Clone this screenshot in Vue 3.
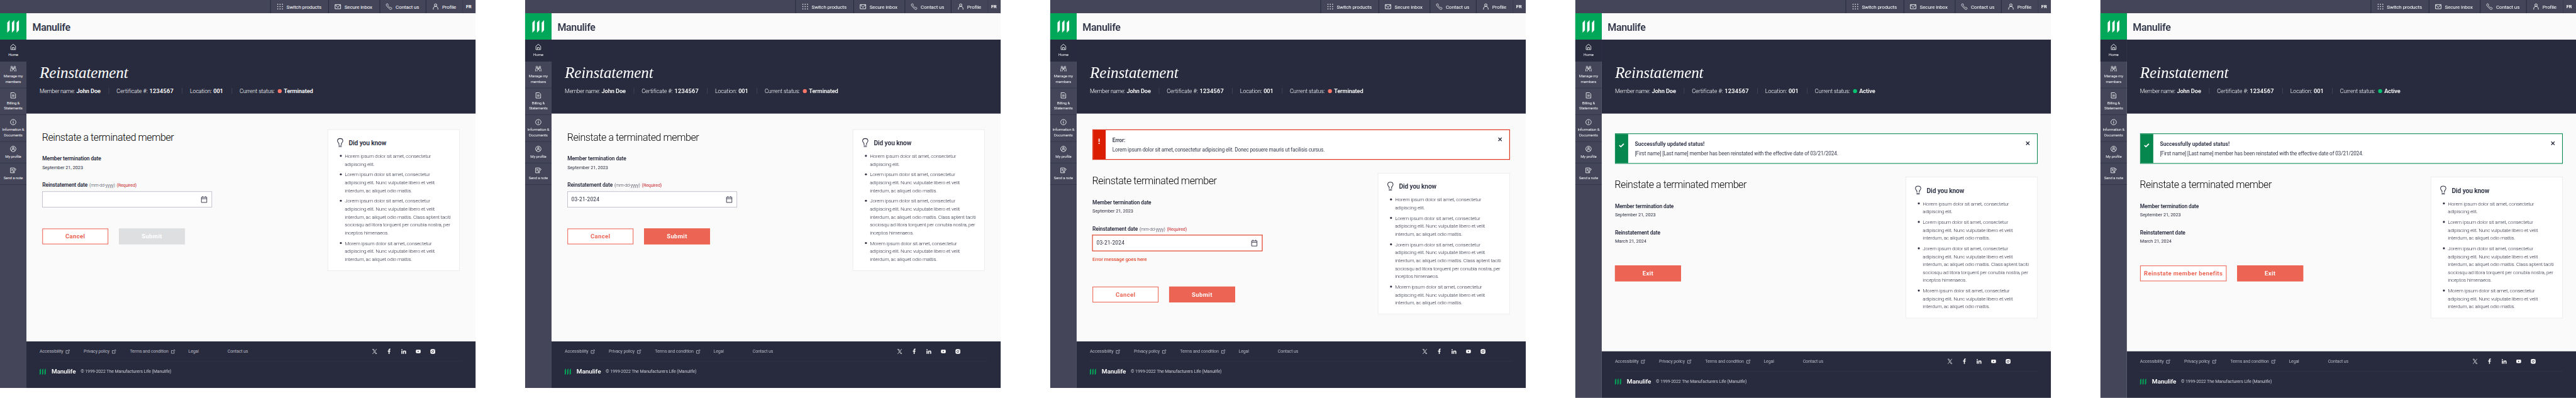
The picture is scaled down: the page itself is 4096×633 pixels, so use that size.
<script setup>
const navItems = [
  { icon: 'home', lines: ['Home'], active: true },
  { icon: 'people', lines: ['Manage my', 'members'] },
  { icon: 'bill', lines: ['Billing &', 'Statements'] },
  { icon: 'info', lines: ['Information &', 'Documents'] },
  { icon: 'account', lines: ['My profile'] },
  { icon: 'note', lines: ['Send a note'] },
]

const tips = [
  ['Horem ipsum dolor sit amet, consectetur', 'adipiscing elit.'],
  [
    'Lorem ipsum dolor sit amet, consectetur',
    'adipiscing elit. Nunc vulputate libero et velit',
    'interdum, ac aliquet odio mattis.',
  ],
  [
    'Jorem ipsum dolor sit amet, consectetur',
    'adipiscing elit. Nunc vulputate libero et velit',
    'interdum, ac aliquet odio mattis. Class aptent taciti',
    'sociosqu ad litora torquent per conubia nostra, per',
    'inceptos himenaeos.',
  ],
  [
    'Morem ipsum dolor sit amet, consectetur',
    'adipiscing elit. Nunc vulputate libero et velit',
    'interdum, ac aliquet odio mattis.',
  ],
]

const footerLinks = [
  { text: 'Accessibility', external: true },
  { text: 'Privacy policy', external: true },
  { text: 'Terms and condition', external: true },
  { text: 'Legal' },
  { text: 'Contact us' },
]

const success = {
  kind: 'success',
  title: 'Successfully updated status!',
  text: '[First name] [Last name] member has been reinstated with the effective date of 03/21/2024.',
}
const error = {
  kind: 'error',
  title: 'Error:',
  text: 'Lorem ipsum dolor sit amet, consectetur adipiscing elit. Donec posuere mauris ut facilisis cursus.',
}

const screens = [
  {
    title: 'Reinstate a terminated member',
    form: true,
    value: '',
    buttons: [
      { text: 'Cancel', look: 'outline' },
      { text: 'Submit', look: 'disabled' },
    ],
  },
  {
    title: 'Reinstate a terminated member',
    form: true,
    value: '03-21-2024',
    buttons: [
      { text: 'Cancel', look: 'outline' },
      { text: 'Submit', look: 'solid' },
    ],
  },
  {
    title: 'Reinstate terminated member',
    form: true,
    value: '03-21-2024',
    invalid: true,
    alert: error,
    buttons: [
      { text: 'Cancel', look: 'outline' },
      { text: 'Submit', look: 'solid' },
    ],
  },
  {
    title: 'Reinstate a terminated member',
    done: true,
    alert: success,
    buttons: [{ text: 'Exit', look: 'solid' }],
  },
  {
    title: 'Reinstate a terminated member',
    done: true,
    alert: success,
    buttons: [
      { text: 'Reinstate member benefits', look: 'outline wide' },
      { text: 'Exit', look: 'solid' },
    ],
  },
]
</script>

<template>
  <div class="viewport">
    <div class="board">
      <section v-for="(s, i) in screens" :key="i" class="screen" :class="{ done: s.done }">
        <header class="topbar">
          <div class="cell c-switch">
            <svg class="ti" viewBox="0 0 20 20" fill="#fff">
              <g v-for="y in [3, 10, 17]" :key="y">
                <rect v-for="x in [3, 10, 17]" :key="x" :x="x - 1.3" :y="y - 1.3" width="2.6" height="2.6" />
              </g>
            </svg>
            <span>Switch products</span>
          </div>
          <div class="cell c-inbox">
            <svg class="ti" viewBox="0 0 20 20" fill="none" stroke="#fff" stroke-width="1.7">
              <path d="M1.6 4h16.8v12.6H1.6zM2.6 4.6L10 12.6l7.4-8" />
            </svg>
            <span>Secure inbox</span>
          </div>
          <div class="cell c-contact">
            <svg class="ti" viewBox="0 0 20 20" fill="none" stroke="#fff" stroke-width="1.5" stroke-linejoin="round">
              <path d="M2 2.6C3.2 1.2 5.6 1 6.6 2.4c1 1.3 1 2.9.2 4.3-.5 1 4.3 6.3 5.6 6 1.700-.6 3.600-.5 5 .7 1.300 1.200 1.300 2.600.5 3.700-1.100 1.500-3.300 1.800-4.900.8C8.500 15.100 4.600 10.700 2 6.700 1.200 5.300 1.100 3.700 2 2.600z" />
            </svg>
            <span>Contact us</span>
          </div>
          <div class="cell c-profile">
            <svg class="ti" viewBox="0 0 20 20" fill="none" stroke="#fff" stroke-width="1.7">
              <circle cx="10" cy="5.400" r="3.700" />
              <path d="M3 18.900v-2.300c0-4 2.600-7.500 7-7.500s7 3.500 7 7.500v2.300" />
            </svg>
            <span>Profile</span>
          </div>
          <div class="cell c-lang"><b>FR</b></div>
        </header>

        <div class="columns">
          <aside class="sidebar">
            <div class="mark">
              <svg width="36" height="38" viewBox="0 0 36 38" fill="#fff">
                <path d="M0 7.600L7.200 0v30.400L0 38zM14 7.600L21.200 0v30.400L14 38zM28.200 7.600L35.400 0v30.400l-7.200 7.600z" />
              </svg>
            </div>
            <nav>
              <a v-for="n in navItems" :key="n.icon" class="nav" :class="{ active: n.active, tall: n.lines.length > 1 }">
                <svg class="ni" viewBox="0 0 20 20" fill="none" stroke="#fff" stroke-width="1.600">
                  <path v-if="n.icon === 'home'" d="M2.800 18.200V8.200L10 1.900l7.200 6.300v10zM7.200 18v-6.300h5.600V18" />
                  <g v-else-if="n.icon === 'people'" stroke-width="1.500">
                    <circle cx="5.400" cy="5" r="2.500" />
                    <circle cx="14.600" cy="5" r="2.500" />
                    <circle cx="10" cy="9.800" r="2.100" />
                    <path d="M1.800 18.200v-5.400c0-2.700 1.200-5.200 3.600-5.200 1.500 0 2.300.7 2.900 1.700M18.200 18.200v-5.400c0-2.700-1.200-5.200-3.600-5.200-1.500 0-2.300.7-2.900 1.700M6.100 18.200v-1.600c0-2.600 1.500-4.700 3.900-4.700s3.900 2.100 3.900 4.700v1.600" />
                  </g>
                  <path v-else-if="n.icon === 'bill'" d="M2.900 1.900h10.300l3.900 3.900v12.300H2.900zM6.200 8.700h7.600M6.200 12.300h7.600" />
                  <g v-else-if="n.icon === 'info'">
                    <circle cx="10" cy="10" r="8.200" />
                    <path d="M10 8.600v5.600M10 5.400v1.900" stroke-width="1.900" />
                  </g>
                  <g v-else-if="n.icon === 'account'">
                    <circle cx="10" cy="10" r="8.200" />
                    <circle cx="10" cy="7.700" r="2.600" />
                    <path d="M5.200 16.300v-1.100c0-2.800 2-4.900 4.800-4.900s4.800 2.100 4.800 4.900v1.100" />
                  </g>
                  <g v-else>
                    <path d="M13.600 6V2.700H1.900v14.600h11.700v-3.200M4.700 7h5.400M4.700 10.400h4" />
                    <path d="M9.900 14.500l.5-3.100 5.800-6.700 2.400 2.100-5.800 6.700z" />
                  </g>
                </svg>
                <span v-for="l in n.lines" :key="l">{{ l }}</span>
              </a>
            </nav>
          </aside>

          <div class="page">
            <div class="brand"><span>Manulife</span></div>

            <div class="hero">
              <h1>Reinstatement</h1>
              <div class="meta">
                <div class="m1"><span>Member name:</span><b>John Doe</b></div>
                <div class="m2"><span>Certificate #:</span><b class="num">1234567</b></div>
                <div class="m3"><span>Location:</span><b>001</b></div>
                <div class="m4"><span>Current status:</span><i class="dot"></i><b>{{ s.done ? 'Active' : 'Terminated' }}</b></div>
              </div>
            </div>

            <main>
              <div v-if="s.alert" class="alert" :class="s.alert.kind">
                <div class="strip">
                  <svg v-if="s.alert.kind === 'success'" width="16" height="12" viewBox="0 0 16 12">
                    <path d="M1.300 6.200L5.900 10.300 14.700 1.600" fill="none" stroke="#fff" stroke-width="3.400" />
                  </svg>
                  <svg v-else class="bang" width="4" height="16" viewBox="0 0 4 16" fill="#fff">
                    <path d="M.4 0h3.200v10H.4zM.4 12.400h3.200V16H.4z" />
                  </svg>
                </div>
                <div class="alert-body">
                  <strong>{{ s.alert.title }}</strong>
                  <p>{{ s.alert.text }}</p>
                </div>
                <svg class="close" width="12" height="12" viewBox="0 0 12 12" fill="none" stroke="#282b3e" stroke-width="2.400">
                  <path d="M1 1l10 10M11 1L1 11" />
                </svg>
              </div>

              <div class="content">
                <div class="left">
                  <h2>{{ s.title }}</h2>
                  <div class="label">Member termination date</div>
                  <div class="date">September 21, 2023</div>

                  <template v-if="s.form">
                    <div class="label second">
                      <span>Reinstatement date</span><span class="hint">(mm-dd-yyyy)</span><span class="req">(Required)</span>
                    </div>
                    <div class="field" :class="{ invalid: s.invalid }">
                      <span>{{ s.value }}</span>
                      <svg width="18" height="20" viewBox="0 0 18 20" fill="none" stroke="#282b3e" stroke-width="1.700">
                        <path d="M.9 3.400h16.200v15.700H.9zM.9 7.800h16.200M4.700 0v4M13.300 0v4" />
                      </svg>
                    </div>
                    <div v-if="s.invalid" class="field-error">Error message goes here</div>
                  </template>
                  <template v-else>
                    <div class="label second">Reinstatement date</div>
                    <div class="date">March 21, 2024</div>
                  </template>

                  <div class="buttons" :class="{ lower: s.invalid }">
                    <button v-for="b in s.buttons" :key="b.text" :class="b.look">{{ b.text }}</button>
                  </div>
                </div>

                <div class="card">
                  <div class="card-head">
                    <svg width="20" height="28" viewBox="0 0 20 28" fill="none" stroke="#282b3e" stroke-width="2">
                      <path d="M6.300 21.200v-4.400C5.600 14.400 1.900 13 1.900 8.800 1.900 4.500 5.400 1.700 10 1.700s8.100 2.800 8.100 7.100c0 4.200-3.700 5.600-4.400 8v4.400" />
                      <path d="M5.200 23.600h9.600M5.200 26.200h9.600" stroke-width="1.500" />
                    </svg>
                    <span>Did you know</span>
                  </div>
                  <ul>
                    <li v-for="(t, k) in tips" :key="k">
                      <span v-for="(l, j) in t" :key="j">{{ l }}</span>
                    </li>
                  </ul>
                </div>
              </div>
            </main>

            <footer>
              <div class="foot-top">
                <div class="links">
                  <a v-for="l in footerLinks" :key="l.text">
                    <span>{{ l.text }}</span>
                    <svg v-if="l.external" width="12" height="12" viewBox="0 0 12 12" fill="none" stroke="#b9b9c3" stroke-width="1.600">
                      <path d="M7 2.600H.9v8.500h8.500V5" />
                      <path d="M5.800 6.200L10.600 1.400M7.600.8h3.700v3.500" stroke-width="1.300" />
                    </svg>
                  </a>
                </div>
                <div class="social">
                  <svg viewBox="0 0 24 24" width="15" height="15" fill="#fff">
                    <path d="M14.200 10.200L22.700 0h-2l-7.400 8.800L7.300 0H.5l8.900 13.300L.5 24h2l7.800-9.300 6.200 9.300h6.800zm-2.800 3.300l-.9-1.300L3.300 1.500h3.100l5.800 8.500.9 1.300 7.600 11.100h-3.100z" />
                  </svg>
                  <svg viewBox="0 0 9 16" width="9" height="16" fill="#fff">
                    <path d="M2.600 16V8.900H.2V6h2.400V3.900C2.600 1.400 4 .1 6.200.1c1 0 2 .2 2 .2v2.400H7c-1.200 0-1.500.7-1.500 1.500V6h2.700l-.5 2.900H5.500V16z" />
                  </svg>
                  <svg viewBox="0 0 15 15" width="15" height="15" fill="#fff">
                    <circle cx="2" cy="2" r="1.700" />
                    <path d="M.5 5h3v9.500h-3zM5.400 5h2.800v1.300C8.700 5.400 9.700 4.800 11.100 4.800c2.900 0 3.500 1.900 3.500 4.400v5.300h-3V9.800c0-1.200 0-2.500-1.500-2.500S8.400 8.500 8.400 9.700v4.800h-3z" />
                  </svg>
                  <svg viewBox="0 0 15 11" width="15" height="11" fill="#fff">
                    <path fill-rule="evenodd" d="M3 .2h9a2.700 2.700 0 0 1 2.700 2.700v5.200A2.700 2.700 0 0 1 12 10.800H3A2.700 2.700 0 0 1 .3 8.100V2.900A2.700 2.700 0 0 1 3 .2zM6 3.300v4.400l3.900-2.200z" />
                  </svg>
                  <svg viewBox="0 0 15 15" width="15" height="15">
                    <rect x=".3" y=".3" width="14.400" height="14.400" rx="4" fill="#fff" />
                    <circle cx="7.300" cy="7.700" r="3" fill="none" stroke="#282b3e" stroke-width="1.500" />
                    <circle cx="11.200" cy="3.700" r="1" fill="#282b3e" />
                  </svg>
                </div>
              </div>
              <div class="foot-bottom">
                <svg width="19" height="20" viewBox="0 0 36 38" fill="#00a758">
                  <path d="M0 7.600L7.200 0v30.400L0 38zM14 7.600L21.200 0v30.400L14 38zM28.200 7.600L35.400 0v30.400l-7.200 7.600z" />
                </svg>
                <b>Manulife</b>
                <span>© 1999-2022 The Manufacturers Life (Manulife)</span>
              </div>
            </footer>
          </div>
        </div>
      </section>
    </div>
  </div>
</template>

<style>
html,
body {
  background: #fff;
  overflow: hidden;
}
</style>

<style scoped>
* {
  box-sizing: border-box;
  margin: 0;
  padding: 0;
}
.viewport {
  width: 4096px;
  height: 633px;
  overflow: hidden;
}
.board {
  width: 7800px;
  height: 1205px;
  display: flex;
  align-items: flex-start;
  gap: 150px;
  transform: scale(0.525128);
  transform-origin: 0 0;
  font-family: Roboto, 'Liberation Sans', sans-serif;
  color: #282b3e;
  white-space: nowrap;
}
svg {
  display: block;
  flex: none;
  overflow: visible;
}
.screen {
  width: 1440px;
  height: 1175px;
  flex: none;
  display: flex;
  flex-direction: column;
  background: #fafafa;
}
.screen.done {
  height: 1205px;
}

/* utility bar */
.topbar {
  height: 40px;
  flex: none;
  display: flex;
  justify-content: flex-end;
  background: #444559;
  color: #fff;
  font-size: 15.3px;
  letter-spacing: -0.27px;
}
.cell {
  display: flex;
  align-items: center;
  gap: 10px;
  padding-left: 17.5px;
  border-left: 2px solid #282b3e;
}
.cell span {
  padding-top: 1px;
}
.ti {
  width: 20px;
  height: 20px;
}
.c-switch { width: 175.500px; }
.c-inbox { width: 155px; }
.c-contact { width: 140.500px; }
.c-profile { width: 111.500px; }
.c-lang {
  width: 39.500px;
  padding-left: 9.500px;
  border-left: 1px solid #34364a;
  font-size: 14px;
  letter-spacing: 0.100px;
}

.columns {
  flex: 1;
  display: flex;
  min-height: 0;
}

/* side navigation */
.sidebar {
  width: 80px;
  flex: none;
  background: #444559;
}
.mark {
  height: 80px;
  display: flex;
  align-items: center;
  justify-content: center;
  background: #00a758;
}
.nav {
  height: 65px;
  display: flex;
  flex-direction: column;
  align-items: center;
  padding-top: 12px;
  border-bottom: 1px solid #282b3e;
  color: #f4f4f7;
  font-size: 11.600px;
  line-height: 16px;
  letter-spacing: -0.300px;
}
.nav.tall {
  height: 81px;
}
.nav.active {
  height: 66px;
  background: #282b3e;
}
.ni {
  width: 20px;
  height: 20px;
  margin-bottom: 4.800px;
}

.page {
  flex: 1;
  display: flex;
  flex-direction: column;
}
.brand {
  height: 80px;
  flex: none;
  display: flex;
  align-items: center;
  padding: 4px 0 0 18px;
  color: #34384b;
  font-size: 30.500px;
  font-weight: 600;
  letter-spacing: -0.650px;
}

/* hero */
.hero {
  height: 224px;
  flex: none;
  padding: 71.800px 0 0 40px;
  background: #282b3e;
  color: #fff;
}
h1 {
  font: italic 400 48px/56px 'Liberation Serif', serif;
  letter-spacing: -0.330px;
}
.meta {
  display: flex;
  margin-top: 16.700px;
  font-size: 17px;
  line-height: 24px;
}
.meta > div {
  display: flex;
}
.meta > div + div::before {
  content: '';
  width: 1px;
  height: 18px;
  margin: 1.500px 23px 0 0;
  background: #565869;
}
.meta span {
  font-weight: 300;
  letter-spacing: -0.250px;
}
.meta b {
  font-size: 17.600px;
  font-weight: 600;
  letter-spacing: -0.200px;
}
.meta b.num {
  letter-spacing: 0.420px;
}
.m1 { width: 209px; }
.m1 span { width: 111.500px; letter-spacing: -0.550px; }
.m2 { width: 222px; }
.m2 span { width: 99.300px; letter-spacing: -0.050px; }
.m3 { width: 150.500px; }
.m3 span { width: 71px; }
.m4 span { width: 115.500px; }
.dot {
  width: 12px;
  height: 12px;
  margin: 6px 6.500px 0 0;
  border-radius: 50%;
  background: #ff7769;
}
.done .dot {
  background: #06c270;
}

/* main */
main {
  flex: 1;
  padding: 48px 48px 0;
}
.done main {
  padding: 60px 40px 0;
}
.alert {
  height: 92px;
  display: flex;
  margin-bottom: 40px;
  background: #fff;
  border: 2px solid #dc1e00;
}
.alert.success {
  border-color: #06874e;
}
.strip {
  width: 38px;
  display: flex;
  justify-content: center;
  align-items: flex-start;
  padding: 28px 2px 0 0;
  background: #dc1e00;
}
.success .strip {
  background: #06874e;
}
.bang {
  margin-top: -2px;
}
.alert-body {
  flex: 1;
  padding: 19px 0 0 20.300px;
  color: #34384b;
  font-size: 15.500px;
  line-height: 24px;
  letter-spacing: -0.270px;
}
.alert-body strong {
  display: block;
  font-size: 16px;
  font-weight: 600;
  letter-spacing: -0.080px;
}
.alert-body p {
  margin-top: 4px;
}
.success .alert-body {
  letter-spacing: -0.180px;
}
.success .alert-body strong {
  font-weight: 700;
  letter-spacing: 0.130px;
}
.close {
  margin: 22px 22px 0 0;
}

.content {
  display: flex;
  justify-content: space-between;
}
.left {
  display: flex;
  flex-direction: column;
  align-items: flex-start;
}
h2 {
  margin-top: 3.800px;
  color: #000;
  font-size: 30.500px;
  line-height: 40px;
  font-weight: 300;
  letter-spacing: -0.820px;
  margin-left: -1px;
}
.label {
  display: flex;
  margin-top: 33px;
  font-size: 16px;
  line-height: 24px;
  font-weight: 600;
  letter-spacing: -0.190px;
}
.label.second {
  margin-top: 31.900px;
}
.hint,
.req {
  font-size: 13.500px;
  font-weight: 300;
  letter-spacing: -0.300px;
  margin-left: 5.500px;
}
.req {
  font-weight: 400;
  letter-spacing: -0.240px;
  color: #c8262b;
}
.date {
  margin-top: 4.100px;
  font-size: 14px;
  line-height: 20px;
  letter-spacing: -0.080px;
}
.field {
  width: 514px;
  height: 48px;
  display: flex;
  align-items: center;
  justify-content: space-between;
  margin-top: 7.200px;
  padding: 0 14px 0 11px;
  background: #fff;
  border: 1px solid #8e90a2;
  font-size: 16px;
  letter-spacing: 0.450px;
}
.field.invalid {
  border-color: #dc1e00;
  outline: 1.500px solid #dc1e00;
}
.field-error {
  margin-top: 13.300px;
  color: #dc1e00;
  font-size: 15.400px;
  line-height: 24px;
  font-weight: 400;
  letter-spacing: -0.270px;
}
.buttons {
  display: flex;
  gap: 32px;
  margin-top: 64px;
}
.buttons.lower {
  margin-top: 70.700px;
}
.done .buttons {
  margin-top: 63.200px;
}
button {
  width: 200px;
  height: 48px;
  border: 2px solid #ec6453;
  background: #ec6453;
  color: #fff;
  font: 700 18px/44px Roboto, 'Liberation Sans', sans-serif;
  letter-spacing: 0.750px;
}
button.outline {
  background: #fff;
  color: #ec6453;
}
button.wide {
  width: 262px;
}
button.disabled {
  border-color: #dedfe1;
  background: #dedfe1;
}

/* tip card */
.card {
  width: 400px;
  height: 428px;
  padding: 25px 0 0 27px;
  background: #fff;
  border: 1px solid #dedee2;
}
.card-head {
  display: flex;
  align-items: center;
  gap: 16px;
  height: 32px;
  font-size: 19.400px;
  line-height: 32px;
  font-weight: 600;
  letter-spacing: -0.200px;
}
.card-head svg {
  margin-top: -4px;
}
.card ul {
  list-style: none;
  display: flex;
  flex-direction: column;
  gap: 8px;
  margin-top: 11.200px;
  padding-left: 24px;
  font-size: 15.400px;
  line-height: 24px;
  font-weight: 300;
  letter-spacing: -0.370px;
}
.card li {
  position: relative;
}
.card li::before {
  content: '';
  position: absolute;
  left: -15px;
  top: 8.200px;
  width: 6px;
  height: 6px;
  border-radius: 50%;
  background: #282b3e;
}
.card li span {
  display: block;
}

/* footer */
footer {
  height: 141px;
  flex: none;
  padding: 0 40px;
  background: #282b3e;
  color: #b9b9c3;
  font-size: 13.400px;
  line-height: 20px;
  letter-spacing: -0.270px;
}
.foot-top {
  height: 61px;
  display: flex;
  justify-content: space-between;
  align-items: center;
  border-bottom: 1px solid #36384b;
}
.links {
  display: grid;
  grid-template-columns: 133.500px 139.500px 177.500px 118.500px auto;
  padding-top: 1.500px;
}
.links a {
  display: flex;
  align-items: center;
  gap: 8px;
}
.social {
  display: grid;
  grid-template-columns: repeat(5, 44px);
  justify-items: center;
  align-items: center;
  margin-right: 68px;
}
.foot-bottom {
  display: flex;
  align-items: center;
  height: 20px;
  margin-top: 20.500px;
}
.foot-bottom b {
  width: 88px;
  margin-left: 17px;
  padding-top: 1px;
  color: #fff;
  font-size: 19px;
  font-weight: 600;
  letter-spacing: -0.150px;
}
.foot-bottom span {
  padding-top: 1px;
  color: #cacad2;
  letter-spacing: -0.200px;
}
</style>
